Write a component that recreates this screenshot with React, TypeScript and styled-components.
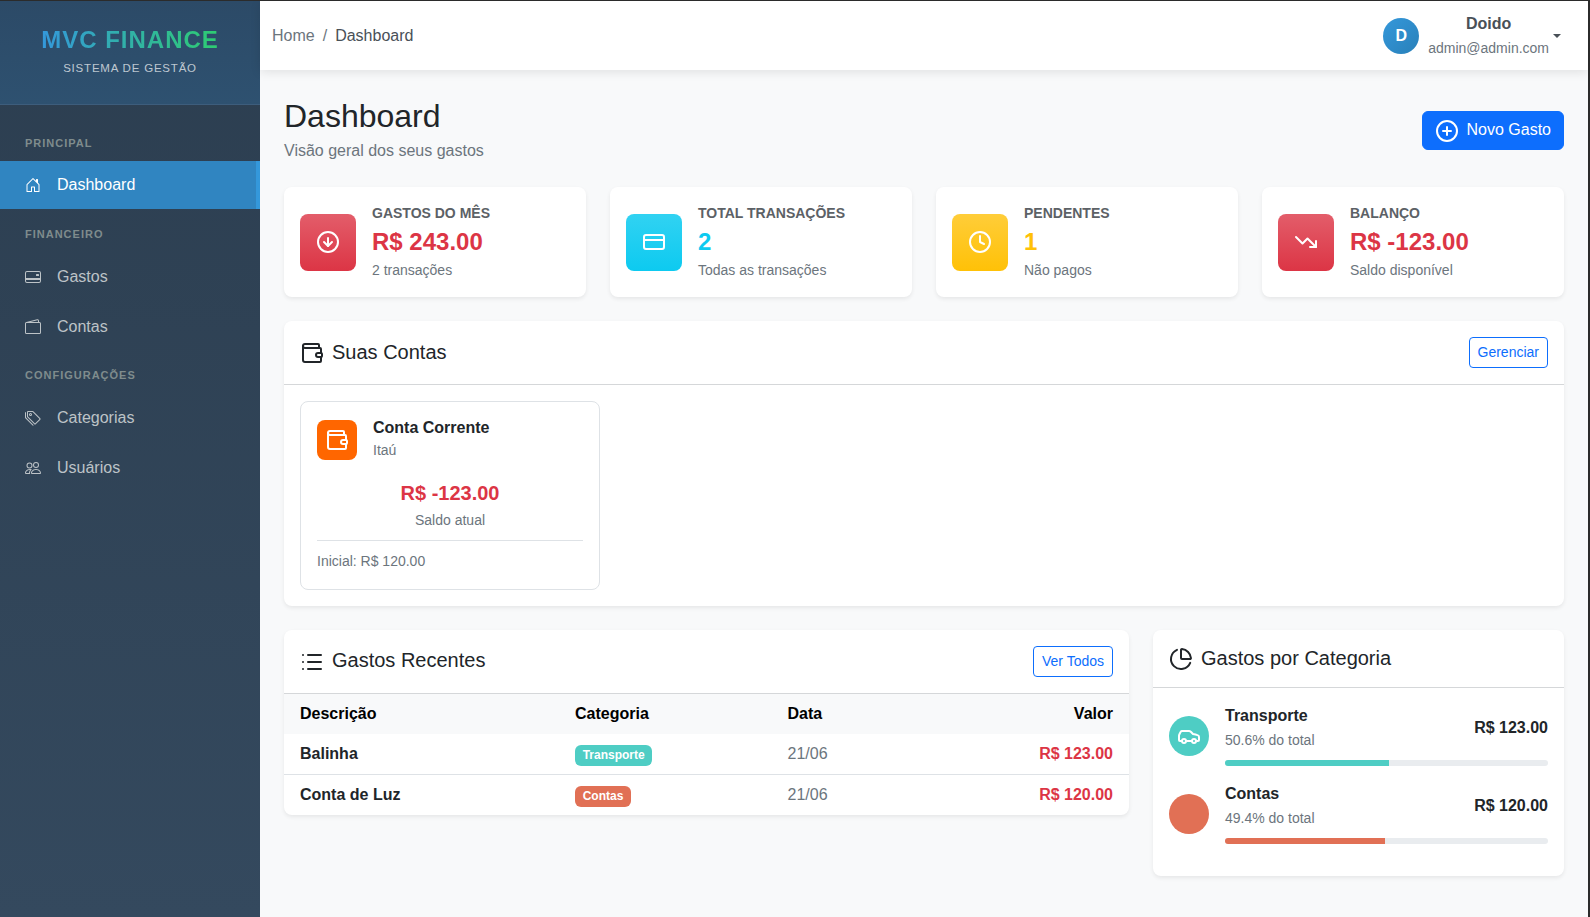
import React from "react";
import styled, { createGlobalStyle } from "styled-components";
import { BsHouseDoor, BsCreditCard2Back, BsWallet2, BsTags, BsPeople } from "react-icons/bs";
import { Car, ChartPie, CircleArrowDown, CirclePlus, Clock, CreditCard, List, TrendingDown, Wallet } from "lucide-react";

const Global = createGlobalStyle`
  html, body { margin: 0; padding: 0; height: 100%; overflow: hidden; }
  body { background: #2b2b2b; font-family: "Liberation Sans", Arial, sans-serif; font-size: 16px; color: #212529; line-height: 1.5; }
  * { box-sizing: border-box; }
`;

const Shell = styled.div`
  display: flex;
  height: 916px;
  width: 1588px;
  margin-top: 1px;
  overflow: hidden;
`;
const Sidebar = styled.aside`
  width: 260px;
  flex: none;
  background: linear-gradient(180deg, #2c3e50 0%, #34495e 100%);
  display: flex;
  flex-direction: column;
`;
const Brand = styled.div`
  height: 104px;
  padding-top: 21px;
  text-align: center;
  background: linear-gradient(180deg, #2c4a67, #2e5170);
  border-bottom: 1px solid #3d5d7c;
`;
const BrandName = styled.div`
  display: inline-block;
  font-size: 24px;
  line-height: 36px;
  font-weight: 700;
  letter-spacing: 1px;
  background: linear-gradient(90deg, #3498db, #2ecc71);
  -webkit-background-clip: text;
  background-clip: text;
  color: transparent;
`;
const BrandSub = styled.div`
  font-size: 11.5px;
  line-height: 17px;
  letter-spacing: 0.8px;
  margin-top: 2px;
  color: rgba(255, 255, 255, 0.7);
`;
const Nav = styled.nav`
  display: flex;
  flex-direction: column;
  padding-top: 32px;
`;
const SectionLabel = styled.div<{ $top: number; $bottom: number }>`
  font-size: 11px;
  line-height: 13px;
  font-weight: 700;
  letter-spacing: 1px;
  color: #7f8c8d;
  padding: 0 25px;
  margin: ${(p) => p.$top}px 0 ${(p) => p.$bottom}px;
`;
const NavItem = styled.div<{ $active?: boolean }>`
  display: flex;
  align-items: center;
  gap: 16px;
  height: 48px;
  margin-bottom: 2px;
  padding-left: 25px;
  color: ${(p) => (p.$active ? "#fff" : "#bdc3c7")};
  background: ${(p) => (p.$active ? "#3085c1" : "transparent")};
  border-right: ${(p) => (p.$active ? "4px solid #3498db" : "none")};
  svg { width: 16px; height: 16px; flex: none; }
`;
const Main = styled.div`
  flex: 1;
  min-width: 0;
  background: #f8f9fa;
  display: flex;
  flex-direction: column;
`;
const Topbar = styled.header`
  height: 69px;
  background: #fff;
  box-shadow: 0 2px 10px rgba(0, 0, 0, 0.1);
  display: flex;
  align-items: center;
  justify-content: space-between;
  padding: 0 27px 0 12px;
`;
const Crumbs = styled.div`
  display: flex;
  gap: 8px;
  color: #6c757d;
  span:last-child { color: #495057; }
`;
const User = styled.div`
  display: flex;
  align-items: center;
`;
const Avatar = styled.div`
  width: 36px;
  height: 36px;
  border-radius: 50%;
  background: linear-gradient(135deg, #3498db, #2980b9);
  color: #fff;
  font-weight: 700;
  display: flex;
  align-items: center;
  justify-content: center;
  margin-right: 9px;
`;
const UserText = styled.div`
  display: flex;
  flex-direction: column;
  align-items: center;
`;
const UserName = styled.div`
  font-weight: 700;
  color: #495057;
  line-height: 24px;
`;
const UserMail = styled.div`
  font-size: 14px;
  line-height: 21px;
  margin-top: 2px;
  color: #6c757d;
`;
const Caret = styled.span`
  width: 0;
  height: 0;
  margin-left: 4px;
  border-top: 4.8px solid #495057;
  border-left: 4.8px solid transparent;
  border-right: 4.8px solid transparent;
`;
const Content = styled.main`
  padding: 24px;
  display: flex;
  flex-direction: column;
`;
const PageHead = styled.div`
  display: flex;
  justify-content: space-between;
  align-items: flex-start;
  height: 69px;
  padding-top: 3px;
  margin-bottom: 24px;
`;
const PageTitle = styled.h1`
  margin: 0;
  font-size: 32px;
  font-weight: 500;
  line-height: 38px;
  color: #212529;
`;
const PageSub = styled.p`
  margin: 4px 0 0;
  color: #6c757d;
  line-height: 24px;
`;
const PrimaryBtn = styled.button`
  display: flex;
  align-items: center;
  gap: 8px;
  height: 39px;
  margin-top: 14px;
  padding: 0 12px;
  background: #0d6efd;
  border: 1px solid #0d6efd;
  border-radius: 6px;
  color: #fff;
  font: inherit;
  svg { width: 24px; height: 24px; }
`;
const BtnLabel = styled.span`
  margin-bottom: 2px;
`;
const Stats = styled.div`
  display: grid;
  grid-template-columns: repeat(4, 1fr);
  gap: 24px;
  margin-bottom: 24px;
`;
const Card = styled.section`
  background: #fff;
  border-radius: 8px;
  box-shadow: 0 2px 4px rgba(0, 0, 0, 0.075);
`;
const StatCard = styled(Card)`
  height: 110px;
  padding: 16px;
  display: flex;
  align-items: center;
  gap: 16px;
`;
const StatIcon = styled.div<{ $from: string; $to: string }>`
  width: 56px;
  height: 57px;
  flex: none;
  border-radius: 8px;
  background: linear-gradient(180deg, ${(p) => p.$from}, ${(p) => p.$to});
  color: #fff;
  display: flex;
  align-items: center;
  justify-content: center;
  svg { width: 24px; height: 24px; }
`;
const StatText = styled.div`
  display: flex;
  flex-direction: column;
`;
const StatLabel = styled.div`
  font-size: 14px;
  line-height: 21px;
  font-weight: 700;
  color: #5c6166;
`;
const StatValue = styled.div<{ $color: string }>`
  font-size: 24px;
  line-height: 29px;
  font-weight: 700;
  margin: 3px 0 4px;
  color: ${(p) => p.$color};
`;
const StatNote = styled.div`
  font-size: 14px;
  line-height: 21px;
  color: #6c757d;
`;
const AccountsCard = styled(Card)`
  margin-bottom: 24px;
`;
const CardHead = styled.div<{ $h: number }>`
  height: ${(p) => p.$h}px;
  padding: 0 16px 0 16px;
  display: flex;
  align-items: center;
  justify-content: space-between;
  border-bottom: 1px solid #d5d7d9;
`;
const CardTitle = styled.h5<{ $lift?: number }>`
  margin: 0 0 ${(p) => p.$lift ?? 2}px;
  display: flex;
  align-items: center;
  gap: 8px;
  font-size: 20px;
  font-weight: 500;
  line-height: 24px;
  color: #212529;
  svg { width: 24px; height: 24px; flex: none; margin-bottom: -${(p) => p.$lift ?? 2}px; }
`;
const OutlineBtn = styled.button`
  height: 31px;
  padding: 0 8px;
  border: 1px solid #0d6efd;
  border-radius: 4px;
  background: #fff;
  color: #0d6efd;
  font: inherit;
  font-size: 14px;
`;
const AccountsBody = styled.div`
  padding: 16px;
`;
const Account = styled.div`
  width: 300px;
  height: 189px;
  border: 1px solid #dee2e6;
  border-radius: 8px;
  padding: 18px 16px 0;
`;
const AccountTop = styled.div`
  display: flex;
  gap: 16px;
`;
const AccountIcon = styled.div`
  width: 40px;
  height: 40px;
  flex: none;
  border-radius: 8px;
  background: #ff6600;
  color: #fff;
  display: flex;
  align-items: center;
  justify-content: center;
  svg { width: 24px; height: 24px; }
`;
const AccountName = styled.div`
  font-weight: 700;
  line-height: 24px;
  margin-top: -4px;
`;
const AccountBank = styled.div`
  font-size: 14px;
  line-height: 21px;
  color: #6c757d;
`;
const AccountValue = styled.div`
  text-align: center;
  margin-top: 17px;
  font-size: 20px;
  line-height: 30px;
  font-weight: 700;
  color: #dc3545;
`;
const AccountNote = styled.div`
  text-align: center;
  font-size: 14px;
  line-height: 21px;
  margin-top: 2px;
  color: #6c757d;
`;
const AccountFoot = styled.div`
  border-top: 1px solid #dee2e6;
  margin-top: 9px;
  padding-top: 10px;
  font-size: 14px;
  line-height: 21px;
  color: #6c757d;
`;
const Bottom = styled.div`
  display: grid;
  grid-template-columns: 845px 411px;
  gap: 24px;
  align-items: start;
`;
const Table = styled.table`
  width: 100%;
  border-collapse: collapse;
  table-layout: fixed;
`;
const Th = styled.th<{ $w?: number; $right?: boolean }>`
  width: ${(p) => (p.$w ? `${p.$w}px` : "auto")};
  height: 40px;
  padding: 0 16px;
  background: #f8f9fa;
  color: #000;
  font-weight: 700;
  text-align: ${(p) => (p.$right ? "right" : "left")};
`;
const Tr = styled.tr`
  & + & td { border-top: 1px solid #dee2e6; height: 41px; }
`;
const Td = styled.td<{ $bold?: boolean; $right?: boolean; $color?: string }>`
  height: 40px;
  padding: 0 16px;
  font-weight: ${(p) => (p.$bold ? 700 : 400)};
  text-align: ${(p) => (p.$right ? "right" : "left")};
  color: ${(p) => p.$color || "#212529"};
`;
const Badge = styled.span<{ $bg: string }>`
  display: inline-block;
  vertical-align: middle;
  margin-top: 2px;
  padding: 0 7.7px;
  height: 21px;
  line-height: 21px;
  border-radius: 6px;
  background: ${(p) => p.$bg};
  color: #fff;
  font-size: 12px;
  font-weight: 700;
`;
const CatBody = styled.div`
  padding: 16px;
`;
const CatRow = styled.div`
  display: flex;
  gap: 16px;
  height: 78px;
  align-items: flex-start;
`;
const CatIcon = styled.div<{ $bg: string }>`
  width: 40px;
  height: 40px;
  flex: none;
  margin-top: 12px;
  border-radius: 50%;
  background: ${(p) => p.$bg};
  color: #fff;
  display: flex;
  align-items: center;
  justify-content: center;
  svg { width: 24px; height: 24px; }
`;
const CatMain = styled.div`
  flex: 1;
`;
const CatTop = styled.div`
  display: flex;
  justify-content: space-between;
  align-items: center;
`;
const CatName = styled.div`
  font-weight: 700;
  line-height: 24px;
`;
const CatShare = styled.div`
  font-size: 14px;
  line-height: 21px;
  margin-top: 2px;
  color: #6c757d;
`;
const CatAmount = styled.div`
  font-weight: 700;
`;
const Track = styled.div`
  height: 6px;
  margin-top: 9px;
  border-radius: 3px;
  background: #e9ecef;
  overflow: hidden;
`;
const Fill = styled.div<{ $bg: string }>`
  height: 100%;
  background: ${(p) => p.$bg};
`;

const RED = "#dc3545";
const stats = [
  { icon: <CircleArrowDown />, from: "#e35d6a", to: "#dc3545", label: "GASTOS DO MÊS", value: "R$ 243.00", color: RED, note: "2 transações" },
  { icon: <CreditCard />, from: "#31d2f2", to: "#0dcaf0", label: "TOTAL TRANSAÇÕES", value: "2", color: "#0dcaf0", note: "Todas as transações" },
  { icon: <Clock />, from: "#ffcd39", to: "#ffc107", label: "PENDENTES", value: "1", color: "#ffc107", note: "Não pagos" },
  { icon: <TrendingDown />, from: "#e35d6a", to: "#dc3545", label: "BALANÇO", value: "R$ -123.00", color: RED, note: "Saldo disponível" },
];
const cats = [
  { name: "Transporte", share: "50.6% do total", amount: "R$ 123.00", color: "#4ecdc4", pct: 50.7, icon: <Car /> },
  { name: "Contas", share: "49.4% do total", amount: "R$ 120.00", color: "#e17055", pct: 49.4, icon: null },
];

export default function App() {
  return (
    <>
      <Global />
      <Shell>
        <Sidebar>
          <Brand>
            <BrandName>MVC FINANCE</BrandName>
            <BrandSub>SISTEMA DE GESTÃO</BrandSub>
          </Brand>
          <Nav>
            <SectionLabel $top={0} $bottom={11}>PRINCIPAL</SectionLabel>
            <NavItem $active><BsHouseDoor />Dashboard</NavItem>
            <SectionLabel $top={17} $bottom={12}>FINANCEIRO</SectionLabel>
            <NavItem><BsCreditCard2Back />Gastos</NavItem>
            <NavItem><BsWallet2 />Contas</NavItem>
            <SectionLabel $top={16} $bottom={12}>CONFIGURAÇÕES</SectionLabel>
            <NavItem><BsTags />Categorias</NavItem>
            <NavItem><BsPeople />Usuários</NavItem>
          </Nav>
        </Sidebar>
        <Main>
          <Topbar>
            <Crumbs><span>Home</span><span>/</span><span>Dashboard</span></Crumbs>
            <User>
              <Avatar>D</Avatar>
              <UserText>
                <UserName>Doido</UserName>
                <UserMail>admin@admin.com</UserMail>
              </UserText>
              <Caret />
            </User>
          </Topbar>
          <Content>
            <PageHead>
              <div>
                <PageTitle>Dashboard</PageTitle>
                <PageSub>Visão geral dos seus gastos</PageSub>
              </div>
              <PrimaryBtn><CirclePlus /><BtnLabel>Novo Gasto</BtnLabel></PrimaryBtn>
            </PageHead>
            <Stats>
              {stats.map((s) => (
                <StatCard key={s.label}>
                  <StatIcon $from={s.from} $to={s.to}>{s.icon}</StatIcon>
                  <StatText>
                    <StatLabel>{s.label}</StatLabel>
                    <StatValue $color={s.color}>{s.value}</StatValue>
                    <StatNote>{s.note}</StatNote>
                  </StatText>
                </StatCard>
              ))}
            </Stats>
            <AccountsCard>
              <CardHead $h={64}>
                <CardTitle><Wallet />Suas Contas</CardTitle>
                <OutlineBtn>Gerenciar</OutlineBtn>
              </CardHead>
              <AccountsBody>
                <Account>
                  <AccountTop>
                    <AccountIcon><Wallet /></AccountIcon>
                    <div>
                      <AccountName>Conta Corrente</AccountName>
                      <AccountBank>Itaú</AccountBank>
                    </div>
                  </AccountTop>
                  <AccountValue>R$ -123.00</AccountValue>
                  <AccountNote>Saldo atual</AccountNote>
                  <AccountFoot>Inicial: R$ 120.00</AccountFoot>
                </Account>
              </AccountsBody>
            </AccountsCard>
            <Bottom>
              <Card>
                <CardHead $h={64}>
                  <CardTitle $lift={4}><List />Gastos Recentes</CardTitle>
                  <OutlineBtn>Ver Todos</OutlineBtn>
                </CardHead>
                <Table>
                  <thead>
                    <tr>
                      <Th $w={275}>Descrição</Th>
                      <Th $w={212.5}>Categoria</Th>
                      <Th $w={180}>Data</Th>
                      <Th $right>Valor</Th>
                    </tr>
                  </thead>
                  <tbody>
                    <Tr>
                      <Td $bold>Balinha</Td>
                      <Td><Badge $bg="#4ecdc4">Transporte</Badge></Td>
                      <Td $color="#6c757d">21/06</Td>
                      <Td $bold $right $color={RED}>R$ 123.00</Td>
                    </Tr>
                    <Tr>
                      <Td $bold>Conta de Luz</Td>
                      <Td><Badge $bg="#e17055">Contas</Badge></Td>
                      <Td $color="#6c757d">21/06</Td>
                      <Td $bold $right $color={RED}>R$ 120.00</Td>
                    </Tr>
                  </tbody>
                </Table>
              </Card>
              <Card>
                <CardHead $h={58}>
                  <CardTitle><ChartPie />Gastos por Categoria</CardTitle>
                </CardHead>
                <CatBody>
                  {cats.map((c) => (
                    <CatRow key={c.name}>
                      <CatIcon $bg={c.color}>{c.icon}</CatIcon>
                      <CatMain>
                        <CatTop>
                          <div>
                            <CatName>{c.name}</CatName>
                            <CatShare>{c.share}</CatShare>
                          </div>
                          <CatAmount>{c.amount}</CatAmount>
                        </CatTop>
                        <Track><Fill $bg={c.color} style={{ width: `${c.pct}%` }} /></Track>
                      </CatMain>
                    </CatRow>
                  ))}
                </CatBody>
              </Card>
            </Bottom>
          </Content>
        </Main>
      </Shell>
    </>
  );
}
